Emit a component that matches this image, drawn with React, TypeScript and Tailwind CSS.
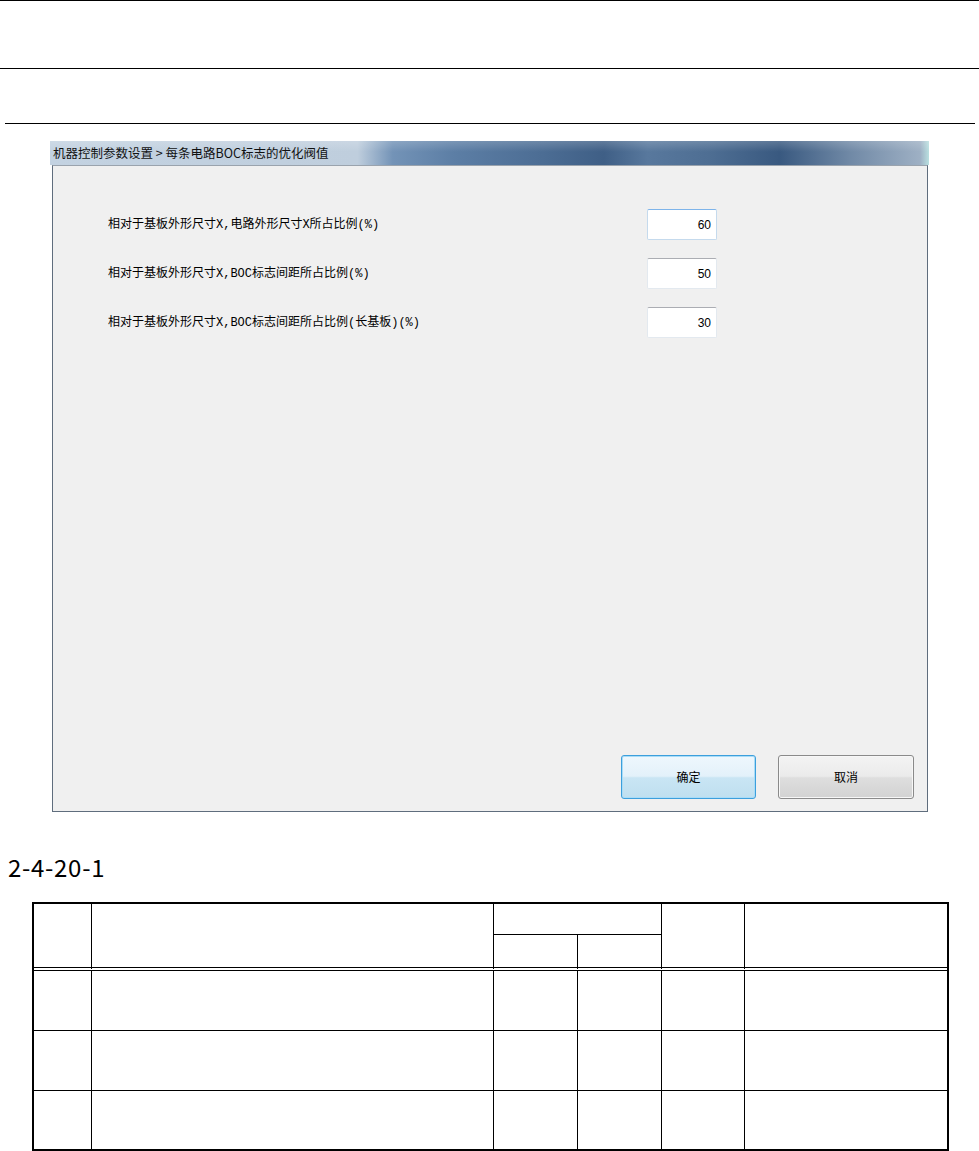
const cjk = "font-['Noto_Sans_CJK_SC',sans-serif]";

const fields = [
  { label: "相对于基板外形尺寸X,电路外形尺寸X所占比例(%)", value: "60", focused: true },
  { label: "相对于基板外形尺寸X,BOC标志间距所占比例(%)", value: "50" },
  { label: "相对于基板外形尺寸X,BOC标志间距所占比例(长基板)(%)", value: "30" },
];

function Field({ label, value, focused }: { label: string; value: string; focused?: boolean }) {
  return (
    <div className="flex items-center">
      <span className="w-[539px] text-[12px] text-black font-['Liberation_Mono','Noto_Sans_CJK_SC',monospace]">
        {label}
      </span>
      <div
        className={
          focused
            ? "w-[70px] h-[31px] bg-white border border-[#c5daed] border-t-[#7eb4ea] rounded-[2px] flex items-center justify-end pr-[5px]"
            : "w-[70px] h-[31px] bg-white border border-[#e3e9ef] border-t-[#abadb3] rounded-[2px] flex items-center justify-end pr-[5px]"
        }
      >
        <span className="text-[12px] text-black font-['Liberation_Sans',sans-serif]">{value}</span>
      </div>
    </div>
  );
}

function Dialog() {
  return (
    <div className="ml-[50px] w-[879px] h-[671px] flex flex-col">
      <div className="h-[24px] flex items-center pl-[3px] bg-[linear-gradient(180deg,rgba(255,255,255,0.18),rgba(255,255,255,0)_45%),linear-gradient(90deg,#c3d2e1_0%,#bfcedd_35%,#7393b7_39%,#5c7ea5_46%,#4c6d94_56%,#3f5f86_63%,#58789d_68%,#4e6e93_75%,#395980_83%,#7089a6_91%,#9eb0c4_99%,#b9e0e0_100%)]">
        <span className={`${cjk} text-[12.5px] text-[#111]`}>机器控制参数设置 &gt; 每条电路BOC标志的优化阀值</span>
      </div>
      <div className="flex-1 ml-[2px] mr-[1px] bg-[#f0f0f0] border border-[#5f6d7d] border-t-[#9aa3ad] flex flex-col">
        <div className="pt-[43px] pl-[55px] flex flex-col gap-[18px]">
          {fields.map((f) => (
            <Field key={f.value} {...f} />
          ))}
        </div>
        <div className="flex-1" />
        <div className="flex justify-end gap-[22px] pr-[13px] pb-[12px]">
          <button className="w-[135px] h-[44px] rounded-[3px] border border-[#3c9fdc] shadow-[inset_0_0_0_1px_#a9dcf7] bg-[linear-gradient(180deg,#eef7fd_0%,#e3f1fa_48%,#c9e5f4_52%,#bfdfef_100%)] flex items-center justify-center">
            <span className={`${cjk} text-[12px] text-black`}>确定</span>
          </button>
          <button className="w-[136px] h-[44px] rounded-[3px] border border-[#8a8a8a] shadow-[inset_0_0_0_1px_#f7f7f7] bg-[linear-gradient(180deg,#f3f3f3_0%,#ebebeb_48%,#dedede_52%,#d2d2d2_100%)] flex items-center justify-center">
            <span className={`${cjk} text-[12px] text-black`}>取消</span>
          </button>
        </div>
      </div>
    </div>
  );
}

function Table() {
  const dbl = "border-b-[4px] [border-bottom-style:double] border-black";
  const rows = [0, 1, 2];
  return (
    <div className="ml-[32px] w-[917px] border-2 border-black grid grid-cols-[58px_402px_84px_84px_83px_202px] grid-rows-[31px_36px_60px_60px_58px]">
      <div className={`row-span-2 border-r border-black ${dbl}`} />
      <div className={`row-span-2 border-r border-black ${dbl}`} />
      <div className="col-span-2 border-r border-b border-black" />
      <div className={`row-span-2 border-r border-black ${dbl}`} />
      <div className={`row-span-2 ${dbl}`} />
      <div className={`border-r border-black ${dbl}`} />
      <div className={`border-r border-black ${dbl}`} />
      {rows.map((r) =>
        [0, 1, 2, 3, 4, 5].map((c) => (
          <div
            key={`${r}-${c}`}
            className={`border-black ${c < 5 ? "border-r" : ""} ${r < 2 ? "border-b" : ""}`}
          />
        ))
      )}
    </div>
  );
}

export default function App() {
  return (
    <div className="w-[979px] min-h-[1151px] bg-white">
      <div className="h-[68px] border-t border-black" />
      <div className="h-[55px] border-t border-black" />
      <div className="ml-[5px] w-[970px] border-t border-black" />
      <div className="pt-[17px]">
        <Dialog />
      </div>
      <div className={`mt-[43px] pl-[8px] text-[24px] leading-[24px] tracking-[0.7px] text-black ${cjk}`}>2-4-20-1</div>
      <div className="mt-[23px]">
        <Table />
      </div>
    </div>
  );
}
